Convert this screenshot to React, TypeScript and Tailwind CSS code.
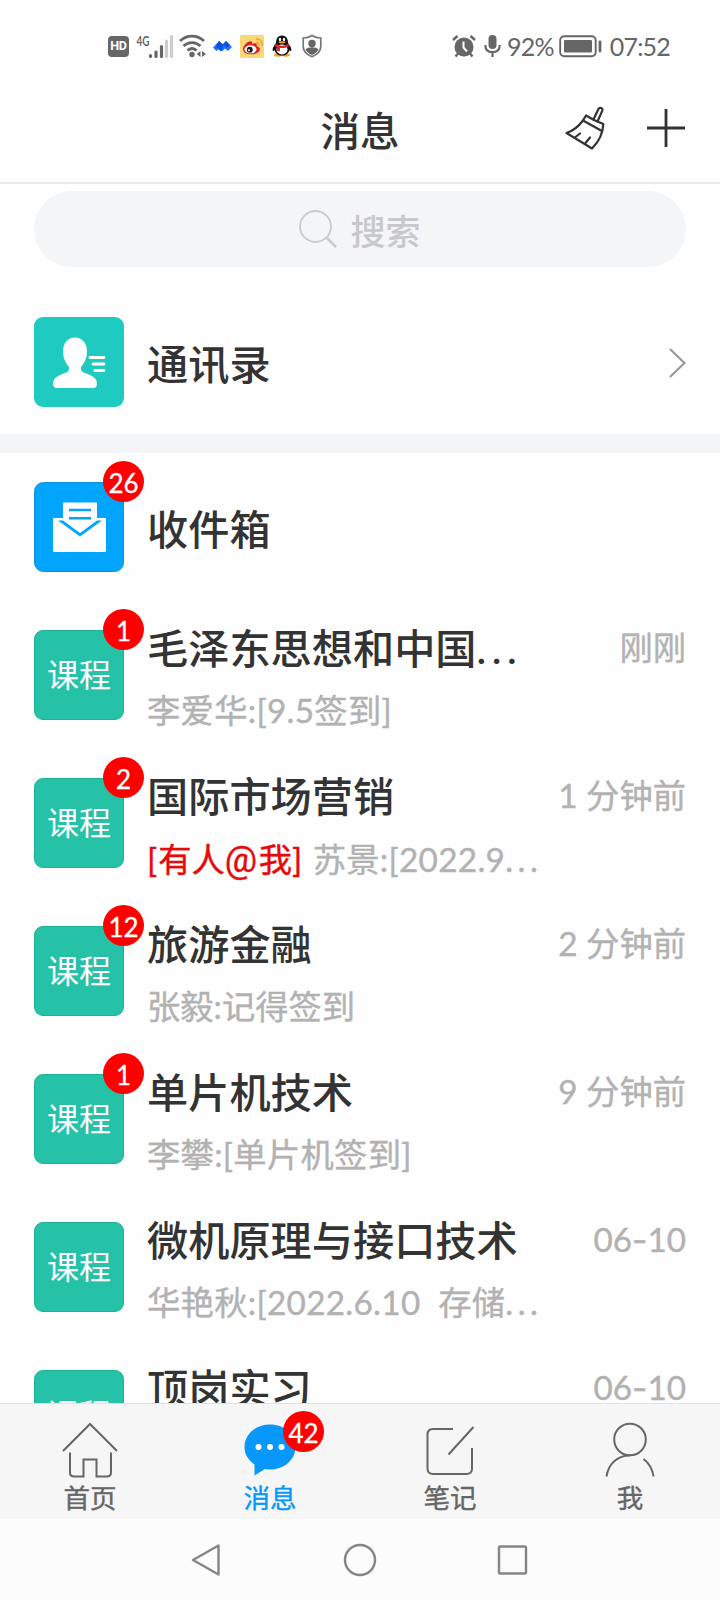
import type { ReactNode } from 'react';

type Chat = {
  id: number;
  title: string;
  truncated?: boolean;
  mentioned?: boolean;
  sender: string;
  senderTruncated?: boolean;
  time: string;
  unread?: number;
};

const chats: Chat[] = [
  { id: 1, title: '毛泽东思想和中国', truncated: true, sender: '李爱华:[9.5签到]', time: '刚刚', unread: 1 },
  { id: 2, title: '国际市场营销', mentioned: true, sender: '苏景:[2022.9', senderTruncated: true, time: '1 分钟前', unread: 2 },
  { id: 3, title: '旅游金融', sender: '张毅:记得签到', time: '2 分钟前', unread: 12 },
  { id: 4, title: '单片机技术', sender: '李攀:[单片机签到]', time: '9 分钟前', unread: 1 },
  { id: 5, title: '微机原理与接口技术', sender: '华艳秋:[2022.6.10  存储', senderTruncated: true, time: '06-10' },
  { id: 6, title: '顶岗实习', sender: '', time: '06-10' },
];

function Badge({ count, className }: { count: number; className: string }) {
  return (
    <span
      className={`absolute flex h-[41px] w-[41px] items-center justify-center rounded-full bg-[#fe0000] pt-[2px] text-[26px] leading-none text-white [-webkit-text-stroke:0.3px_white] ${className}`}
    >
      {count}
    </span>
  );
}

function StatusBar() {
  return (
    <div className="flex h-[92px] items-center justify-between pr-[50px] pl-[108px] text-[#666]">
      <div className="flex items-center">
        <span className="flex h-[21px] w-[21px] items-center justify-center rounded-[4px] bg-[#666] font-[Roboto] text-[12.500px] leading-none font-bold tracking-[-0.3px] text-white">
          HD
        </span>
        {/* signal */}
        <svg className="ml-[7px] h-[26px] w-[38px]" viewBox="0 0 38 26">
          <text x="0.5" y="12.500" fontSize="13" fontWeight="700" fill="#666" textLength="13" lengthAdjust="spacingAndGlyphs">4G</text>
          <g strokeWidth="3.2" strokeLinecap="round" stroke="#666">
            <path d="M14.500 22.600v.8M20 19v4.400M25.500 13.500v10" />
            <path d="M30.500 8v15.500M35.500 3.500v20" stroke="#ccc" />
          </g>
        </svg>
        {/* wifi */}
        <svg className="ml-[5px] h-[24px] w-[28px]" viewBox="0 0 28 24" fill="none" stroke="#666" strokeWidth="2.800">
          <path d="M1 7C8 .5 18 .5 25 7M4.500 12c5-4.600 12-4.600 17 0M8.500 16.500c3-2.500 6.500-2.500 9 0" />
          <circle cx="13" cy="20.500" r="2.700" fill="#666" stroke="none" />
          <path d="M21.500 17v6l-3.800-3zM23 17v6l4-3z" fill="#666" stroke="none" />
        </svg>
        <svg className="ml-[6px] h-[14px] w-[19px]" viewBox="0 0 19 14">
          <path d="M0 8.500L6 2l3.500 3.200L13 2l6 6-4 4-3-2.500L9 12.500 6 10l-2.500 2z" fill="#1f74f5" />
          <path d="M6 2l4.500 4-2.500 6.500L3 7.500zM13 2l4 4-3.500 3-3-3.500z" fill="#0b52d8" />
        </svg>
        {/* weibo */}
        <svg className="ml-[8px] h-[23px] w-[24px]" viewBox="0 0 24 23">
          <rect width="24" height="23" rx="1.500" fill="#fbd877" />
          <path d="M3 14.500C3 10 9 5 11.500 6.500c1 .7.6 1.800.4 2.500 2.800-1.200 5.500-1 4.800 2 4 1.300 4 4 1.600 6C14.500 20.500 4 20.500 3 14.500z" fill="#df1e20" />
          <ellipse cx="10.500" cy="14.300" rx="6" ry="4" fill="#fff" />
          <circle cx="9.800" cy="14.700" r="2.900" fill="#1c1718" />
          <circle cx="9" cy="15.300" r="1" fill="#fff" />
          <path d="M16 7.500c2-.3 3.300 1 2.900 3M16 4c4.500-.5 6.900 2.500 6 7" fill="none" stroke="#f0a02c" strokeWidth="1.500" />
        </svg>
        {/* penguin */}
        <svg className="ml-[8px] h-[22px] w-[20px]" viewBox="0 0 20 22">
          <ellipse cx="6" cy="20" rx="4" ry="1.700" fill="#f3a51c" />
          <ellipse cx="14" cy="20" rx="4" ry="1.700" fill="#f3a51c" />
          <path d="M10 .5c4 0 6 3 6 7.500 2 2.500 3.800 5.500 3.300 7.500-.4 1.300-1.500.3-2-.5-.5 3.500-3.300 5.500-7.300 5.500S3.200 18.500 2.700 15c-.5.800-1.600 1.800-2 .5C.2 13.500 2 10.500 4 8 4 3.500 6 .5 10 .5z" fill="#111" />
          <ellipse cx="10" cy="14.500" rx="5.500" ry="5" fill="#fff" />
          <ellipse cx="8" cy="4.500" rx="1.200" ry="1.700" fill="#fff" />
          <ellipse cx="12" cy="4.500" rx="1.200" ry="1.700" fill="#fff" />
          <ellipse cx="10" cy="7.300" rx="3.400" ry="1.100" fill="#f3a51c" />
          <path d="M3.500 8.800c4 2.500 9 2.500 13 0l.5 2.400c-3 1.700-6 2.100-9 1.800V16H5v-3.800l-2-1z" fill="#e0262b" />
        </svg>
        {/* shield */}
        <svg className="ml-[10px] h-[24px] w-[20px]" viewBox="0 0 20 24">
          <path d="M10 1.500C7.500 3.300 4.500 4 1.200 4v8.500c0 4.500 3.300 8 8.800 10.200 5.500-2.200 8.800-5.700 8.800-10.200V4C15.500 4 12.500 3.300 10 1.500z" fill="none" stroke="#777" strokeWidth="1.700" />
          <circle cx="10" cy="9.500" r="3.700" fill="#666" />
          <path d="M3.500 15.500c2.500-3 10.500-3 13 0-1.300 2.500-3.500 4.300-6.500 5.500-3-1.200-5.200-3-6.500-5.500z" fill="#666" />
        </svg>
      </div>

      <div className="flex items-center">
        <svg className="h-[24px] w-[24px]" viewBox="0 0 24 24">
          <circle cx="12" cy="13" r="9.500" fill="#666" />
          <path d="M1 6l4.500-4M23 6l-4.500-4M6 19.500l-2.500 3M18 19.500l2.500 3" stroke="#666" strokeWidth="2.400" />
          <path d="M11.500 7.500v6l3.500 4" fill="none" stroke="#fff" strokeWidth="2" />
        </svg>
        <svg className="ml-[8px] h-[24px] w-[17px]" viewBox="0 0 17 24">
          <rect x="4.500" y="1" width="8" height="14" rx="4" fill="#666" />
          <path d="M1.300 11c0 4.800 3 7.200 7.200 7.200s7.200-2.400 7.200-7.200M8.500 18v5" fill="none" stroke="#666" strokeWidth="2.200" />
        </svg>
        <span className="ml-[6px] text-[25px] leading-none tracking-[-0.8px]">92%</span>
        <svg className="ml-[5px] h-[24px] w-[44px]" viewBox="0 0 44 24">
          <rect x="1.200" y="2.200" width="35.500" height="20" rx="4" fill="none" stroke="#666" strokeWidth="1.900" />
          <rect x="5" y="6" width="28" height="12.500" rx="1" fill="#666" />
          <path d="M41 8v9" stroke="#666" strokeWidth="2.800" strokeLinecap="round" />
        </svg>
        <span className="ml-[7px] text-[25px] leading-none tracking-[-0.8px]">07:52</span>
      </div>
    </div>
  );
}

function Header() {
  return (
    <header className="grid h-[92px] grid-cols-3 items-start border-b-2 border-[#eaeaea] px-[34px]">
      <span />
      <h1 className="pt-[19px] text-center text-[39.500px] leading-none font-medium text-[#333]">消息</h1>
      <div className="flex items-start justify-end gap-[42px] pt-[14px] pr-px">
        <svg className="h-[44px] w-[40px]" viewBox="0 0 40 44" fill="none" stroke="#333" strokeWidth="2.200" strokeLinejoin="round" strokeLinecap="round">
          <path d="M28.500 13.500l4.800-10.200c1.400-2.800 5-1.200 3.900 1.600L32.500 15.500" />
          <path d="M29 14L21 9.500 18 14.500C13.500 20.500 8 25 1.500 27L27 42.500C34 35.500 38 27.500 38.300 18z" />
          <path d="M18 14.500l18.500 10.200M10.500 31l4.500-3.500M20.500 37l4.500-5.500" />
        </svg>
        <svg className="mt-[3px] h-[38px] w-[38px]" viewBox="0 0 38 38" stroke="#333" strokeWidth="2.800">
          <path d="M19 0v38M0 19h38" />
        </svg>
      </div>
    </header>
  );
}

function Row({ icon, children }: { icon: ReactNode; children: ReactNode }) {
  return (
    <div className="flex h-[148px] shrink-0 items-start px-[34px] pt-[29px]">
      <div className="relative h-[90px] w-[90px] shrink-0">{icon}</div>
      <div className="ml-[23px] min-w-0 flex-1">{children}</div>
    </div>
  );
}

function ChatRow({ chat }: { chat: Chat }) {
  const [month, day] = chat.time.split('-');

  return (
    <Row
      icon={
        <>
          <div className="flex h-full w-full items-center justify-center rounded-[9px] border border-[#1fb193] bg-[#26c2a8] text-[32px] leading-none text-white">
            课程
          </div>
          {chat.unread && <Badge count={chat.unread} className="top-[-21px] left-[69px]" />}
        </>
      }
    >
      <div className="-mt-[6px] flex h-[48px] items-center justify-between whitespace-nowrap">
        <h2 className="pt-px text-[41.200px] leading-none font-medium text-[#333]">
          {chat.title}
          {chat.truncated && <span className="tracking-[5.500px]">...</span>}
        </h2>
        <time className="text-[33.300px] leading-none text-[#b2b2b2] [-webkit-text-stroke:0.4px_#b2b2b2]">
          {month}
          {day && (
            <>
              <span className="font-[Inter]">-</span>
              {day}
            </>
          )}
        </time>
      </div>
      <p className="mt-[22px] text-[33.300px] leading-none whitespace-pre text-[#b2b2b2] [-webkit-text-stroke:0.4px_#b2b2b2]">
        {chat.mentioned && (
          <span className="text-[#e60b0b] [-webkit-text-stroke:0.4px_#e60b0b]">
            <span className="tracking-[1px]">[</span>有人<span className="font-[Roboto] text-[36px] leading-none tracking-[1.500px]">@</span>我<span className="tracking-[2px]">]</span>{' '}
          </span>
        )}
        <span className={chat.sender.includes('[') ? 'tracking-[0.3px]' : ''}>{chat.sender}</span>
        {chat.senderTruncated && <span className="tracking-[4.500px]">...</span>}
      </p>
    </Row>
  );
}

function Tab({ label, active, children }: { label: string; active?: boolean; children: ReactNode }) {
  return (
    <div className={`flex flex-1 flex-col items-center pt-[16px] ${active ? 'text-[#0898fb]' : 'text-[#666]'}`}>
      <div className="relative h-[60px] w-[60px]">{children}</div>
      <span className="mt-[5px] text-[26.500px] leading-none [-webkit-text-stroke:0.4px_currentColor]">{label}</span>
    </div>
  );
}

export default function App() {
  return (
    <div className="flex h-[1600px] w-[720px] flex-col overflow-hidden bg-[#fefefe] font-[Lato,'Noto_Sans_CJK_SC',sans-serif]">
      <StatusBar />
      <Header />

      <div className="px-[34px] pt-[7px]">
        <div className="flex h-[76px] items-center justify-center gap-[13px] rounded-full bg-[#f3f5f7] text-[#c8c8ca]">
          <svg className="h-[38px] w-[38px]" viewBox="0 0 38 38" fill="none" stroke="#cacacc">
            <circle cx="16.500" cy="16.500" r="15.500" strokeWidth="1.800" />
            <path d="M27 27l10 10" strokeWidth="2.600" />
          </svg>
          <span className="pt-[5px] text-[35px] leading-none font-medium">搜索</span>
        </div>
      </div>

      {/* Contacts */}
      <div className="flex h-[167px] shrink-0 items-start px-[34px] pt-[50px]">
        <svg className="h-[90px] w-[90px]" viewBox="0 0 90 90">
          <rect width="90" height="90" rx="9" fill="#1fcbc0" />
          <path d="M41 20.500c7 0 12 5.500 12 14 0 7-3 12-6 15.500 0 4 1 5 4 6 8 3 12 5 12 11 0 2.500-1.500 4-4 4H23c-2.500 0-4-1.500-4-4 0-6 4-8 12-11 3-1 4-2 4-6-3-3.500-6-8.500-6-15.500 0-8.500 5-14 12-14z" fill="#fff" />
          <path d="M56 40.500h14M59 47h11M61 53.500h9" stroke="#fff" strokeWidth="2.800" strokeLinecap="round" />
        </svg>
        <span className="mt-[27px] ml-[23px] flex-1 text-[41.200px] leading-none font-medium text-[#333]">通讯录</span>
        <svg className="mt-[31px] h-[30px] w-[17px]" viewBox="0 0 17 30" fill="none" stroke="#999" strokeWidth="2.200">
          <path d="M1 1l14.500 14L1 29" />
        </svg>
      </div>
      <div className="h-[19px] shrink-0 bg-[#f4f5f6]" />

      {/* Message list */}
      <div className="flex min-h-0 flex-1 flex-col overflow-hidden">
        <Row
          icon={
            <>
              <svg className="h-[90px] w-[90px]" viewBox="0 0 90 90">
                <rect x=".5" y=".5" width="89" height="89" rx="9" fill="#02a5fe" stroke="#0a90dd" />
                <path d="M19 36h10v-15.500h34V36h9v32.500a1.500 1.500 0 0 1-1.500 1.500h-50a1.500 1.500 0 0 1-1.500-1.500z" fill="#fff" />
                <path d="M24 38.500l5 0 17 12.500 17-12.500h5L46 54.500z" fill="#02a5fe" />
                <path d="M35 28h22M35 36.300h22" stroke="#02a5fe" strokeWidth="2.600" />
              </svg>
              <Badge count={26} className="top-[-21px] left-[69px]" />
            </>
          }
        >
          <h2 className="mt-[27px] text-[41.200px] leading-none font-medium text-[#333]">收件箱</h2>
        </Row>
        {chats.map((chat) => (
          <ChatRow key={chat.id} chat={chat} />
        ))}
      </div>

      {/* Tab bar */}
      <nav className="flex h-[116px] shrink-0 border-t border-[#e2e2e0] bg-[#f6f6f6]">
        <Tab label="首页">
          <svg className="h-full w-full" viewBox="0 0 60 60" fill="none" stroke="#666" strokeWidth="2">
            <path d="M3 31L30 4l27 27M10 32.500v20c0 3 1 4 4 4h9.500v-17h13v17H47c3 0 4-1 4-4v-20" />
          </svg>
        </Tab>
        <Tab label="消息" active>
          <svg className="h-full w-full" viewBox="0 0 60 60">
            <path d="M30 4.500c14.500 0 25.500 10 25.500 22.500S44.500 49.500 30 49.500c-2 0-3.500 0-5-.5L14.500 55.500V44.500C8 40 4.500 34 4.500 27 4.500 14.500 15.500 4.500 30 4.500z" fill="#0898fb" />
            <circle cx="18.500" cy="27" r="3" fill="#fff" />
            <circle cx="30" cy="27" r="3" fill="#fff" />
            <circle cx="41.500" cy="27" r="3" fill="#fff" />
          </svg>
          <Badge count={42} className="top-[-9px] left-[43px]" />
        </Tab>
        <Tab label="笔记">
          <svg className="h-full w-full" viewBox="0 0 60 60" fill="none" stroke="#666" strokeWidth="2">
            <path d="M33 9H13c-3.500 0-5.500 2-5.500 5.500v34c0 3.500 2 5.500 5.500 5.500h33.500c3.500 0 5.500-2 5.500-5.500V28M28.500 34.500L53.500 7" />
          </svg>
        </Tab>
        <Tab label="我">
          <svg className="h-full w-full" viewBox="0 0 60 60" fill="none" stroke="#666" strokeWidth="2">
            <circle cx="30" cy="19.500" r="15.800" />
            <path d="M6.500 56.500C8.500 43 18 35.500 30 35.500M43.500 39c6 4.500 9 9.500 10 17.500" />
          </svg>
        </Tab>
      </nav>

      {/* System navigation */}
      <div className="flex h-[81px] shrink-0 items-center justify-center gap-[120px] bg-[#fcfcfc]">
        <svg className="h-[34px] w-[34px]" viewBox="0 0 34 34" fill="none" stroke="#858585" strokeWidth="2.400" strokeLinejoin="round">
          <path d="M29.500 2.500v29L4 17z" />
        </svg>
        <svg className="h-[34px] w-[34px]" viewBox="0 0 34 34" fill="none" stroke="#858585" strokeWidth="2.400">
          <circle cx="17" cy="17" r="15" />
        </svg>
        <svg className="h-[34px] w-[34px]" viewBox="0 0 34 34" fill="none" stroke="#858585" strokeWidth="2.400">
          <rect x="2" y="3.500" width="27" height="27" rx="1" />
        </svg>
      </div>
    </div>
  );
}
